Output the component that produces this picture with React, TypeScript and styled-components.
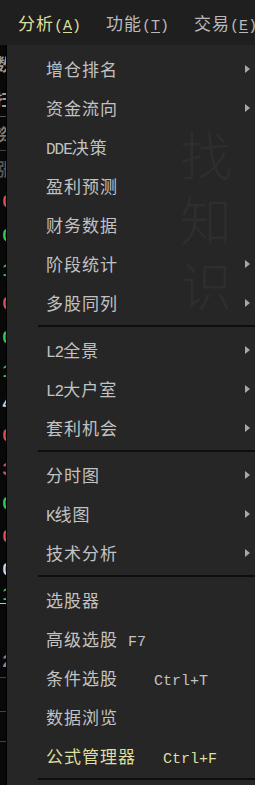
import * as React from "react";
import styled, { createGlobalStyle } from "styled-components";

const CJK = `"Noto Sans CJK SC", "Liberation Sans", sans-serif`;
const MONO = `"Liberation Mono", "Noto Sans CJK SC", monospace`;

const TEXT = "#c2c2c2";
const YELLOW = "#dede9e";
const PANEL = "#262626";

type Entry =
  | { kind: "item"; label: string; latin?: string; sub?: boolean; key?: string; keyGap?: number; hot?: boolean }
  | { kind: "sep" };

const entries: Entry[] = [
  { kind: "item", label: "增仓排名", sub: true },
  { kind: "item", label: "资金流向", sub: true },
  { kind: "item", latin: "DDE", label: "决策" },
  { kind: "item", label: "盈利预测" },
  { kind: "item", label: "财务数据" },
  { kind: "item", label: "阶段统计", sub: true },
  { kind: "item", label: "多股同列", sub: true },
  { kind: "sep" },
  { kind: "item", latin: "L2", label: "全景", sub: true },
  { kind: "item", latin: "L2", label: "大户室", sub: true },
  { kind: "item", label: "套利机会", sub: true },
  { kind: "sep" },
  { kind: "item", label: "分时图", sub: true },
  { kind: "item", latin: "K", label: "线图", sub: true },
  { kind: "item", label: "技术分析", sub: true },
  { kind: "sep" },
  { kind: "item", label: "选股器" },
  { kind: "item", label: "高级选股", key: "F7", keyGap: 10 },
  { kind: "item", label: "条件选股", key: "Ctrl+T", keyGap: 36 },
  { kind: "item", label: "数据浏览" },
  { kind: "item", label: "公式管理器", key: "Ctrl+F", keyGap: 27, hot: true },
  { kind: "sep" },
];

// clipped cells of the table that sits behind the menu
const stripCells: { ch: string; color: string; h: number; line?: string }[] = [
  { ch: "数", color: "#9a9a9a", h: 36 },
  { ch: "扫", color: "#9a9a9a", h: 36, line: "#555" },
  { ch: "资", color: "#7a7a7a", h: 34, line: "#444" },
  { ch: "涨", color: "#555", h: 35 },
  { ch: "0", color: "#e05050", h: 32 },
  { ch: "0", color: "#3cc850", h: 36 },
  { ch: "1", color: "#3cc850", h: 33 },
  { ch: "0", color: "#e05050", h: 34 },
  { ch: "0", color: "#3cc850", h: 34 },
  { ch: "1", color: "#3cc850", h: 33 },
  { ch: "4", color: "#d0d0d0", h: 31 },
  { ch: "0", color: "#e05050", h: 34 },
  { ch: "3", color: "#e05050", h: 34 },
  { ch: "0", color: "#3cc850", h: 34 },
  { ch: "0", color: "#e05050", h: 32 },
  { ch: "0", color: "#d8d8d8", h: 33 },
  { ch: "1", color: "#3cc850", h: 18, line: "#c8c880" },
  { ch: "", color: "#444", h: 42 },
  { ch: "2", color: "#888", h: 32, line: "#444" },
  { ch: "", color: "#444", h: 34, line: "#444" },
  { ch: "", color: "#444", h: 30, line: "#444" },
  { ch: "", color: "#444", h: 30 },
];

const GlobalStyle = createGlobalStyle`
  html, body {
    margin: 0;
    padding: 0;
    background: #0b0b0b;
    overflow: hidden;
  }
`;

const Screen = styled.div`
  width: 255px;
  height: 785px;
  display: flex;
  flex-direction: column;
  overflow: hidden;
  font-family: ${CJK};
`;

const MenuBar = styled.div`
  height: 45px;
  flex-shrink: 0;
  background: #1f1f1f;
  display: flex;
  align-items: center;
  gap: 25px;
  padding-left: 18px;
  white-space: nowrap;
`;

const BarLabel = styled.span<{ $active?: boolean }>`
  font-size: 17px;
  letter-spacing: 1px;
  color: ${(p) => (p.$active ? YELLOW : "#bababa")};
`;

const Mnemonic = styled.span`
  font-family: ${MONO};
  font-size: 15px;
  letter-spacing: 0;
  u {
    text-underline-offset: 2px;
  }
`;

const Body = styled.div`
  flex: 1;
  display: flex;
  min-height: 0;
`;

const Strip = styled.div`
  width: 6px;
  flex-shrink: 0;
  background: #080808;
  border-right: 1px solid #000;
  overflow: hidden;
  display: flex;
  flex-direction: column;
`;

const StripCell = styled.div<{ $h: number; $color: string; $line?: string }>`
  height: ${(p) => p.$h}px;
  flex-shrink: 0;
  display: flex;
  align-items: center;
  justify-content: flex-end;
  color: ${(p) => p.$color};
  font-family: "Liberation Sans", ${CJK};
  font-weight: bold;
  font-size: 17px;
  border-bottom: ${(p) => (p.$line ? `1px solid ${p.$line}` : "none")};
  box-sizing: border-box;
  span {
    margin-right: -6px;
  }
`;

const Panel = styled.div`
  flex: 1;
  position: relative;
  background: ${PANEL};
  padding-top: 4px;
  display: flex;
  flex-direction: column;
`;

const Watermark = styled.div`
  position: absolute;
  left: 173px;
  top: 76px;
  font-size: 52px;
  line-height: 65px;
  font-weight: 300;
  color: #2e2e2e;
  display: flex;
  flex-direction: column;
  pointer-events: none;
`;

const Row = styled.div<{ $hot?: boolean }>`
  height: 39px;
  flex-shrink: 0;
  display: flex;
  align-items: center;
  padding: 0 5px 0 39px;
  color: ${(p) => (p.$hot ? YELLOW : TEXT)};
  font-size: 17px;
  letter-spacing: 1px;
  white-space: nowrap;
  position: relative;
  z-index: 1;
`;

const Label = styled.span``;

const Latin = styled.span`
  font-family: ${MONO};
  font-size: 16px;
  letter-spacing: -1px;
`;

const Shortcut = styled.span<{ $gap: number }>`
  font-family: ${MONO};
  font-size: 15px;
  letter-spacing: 0;
  margin-left: ${(p) => p.$gap}px;
`;

const Arrow = styled.span`
  margin-left: auto;
  width: 0;
  height: 0;
  border-top: 4px solid transparent;
  border-bottom: 4px solid transparent;
  border-left: 5px solid #a8a8a8;
`;

const Separator = styled.div`
  height: 8px;
  flex-shrink: 0;
  display: flex;
  align-items: center;
  padding-left: 31px;
  &::after {
    content: "";
    flex: 1;
    height: 2px;
    background: #0e0e0e;
  }
`;

export default function App() {
  return (
    <>
      <GlobalStyle />
      <Screen>
        <MenuBar>
          <BarLabel $active>
            分析<Mnemonic>(<u>A</u>)</Mnemonic>
          </BarLabel>
          <BarLabel>
            功能<Mnemonic>(<u>T</u>)</Mnemonic>
          </BarLabel>
          <BarLabel>
            交易<Mnemonic>(<u>E</u>)</Mnemonic>
          </BarLabel>
        </MenuBar>
        <Body>
          <Strip>
            {stripCells.map((c, i) => (
              <StripCell key={i} $h={c.h} $color={c.color} $line={c.line}>
                <span>{c.ch}</span>
              </StripCell>
            ))}
          </Strip>
          <Panel>
            <Watermark>
              <span>找</span>
              <span>知</span>
              <span>识</span>
            </Watermark>
            {entries.map((e, i) =>
              e.kind === "sep" ? (
                <Separator key={i} />
              ) : (
                <Row key={i} $hot={e.hot}>
                  <Label>
                    {e.latin && <Latin>{e.latin}</Latin>}
                    {e.label}
                    {e.key && <Shortcut $gap={e.keyGap ?? 10}>{e.key}</Shortcut>}
                  </Label>
                  {e.sub && <Arrow />}
                </Row>
              )
            )}
          </Panel>
        </Body>
      </Screen>
    </>
  );
}
